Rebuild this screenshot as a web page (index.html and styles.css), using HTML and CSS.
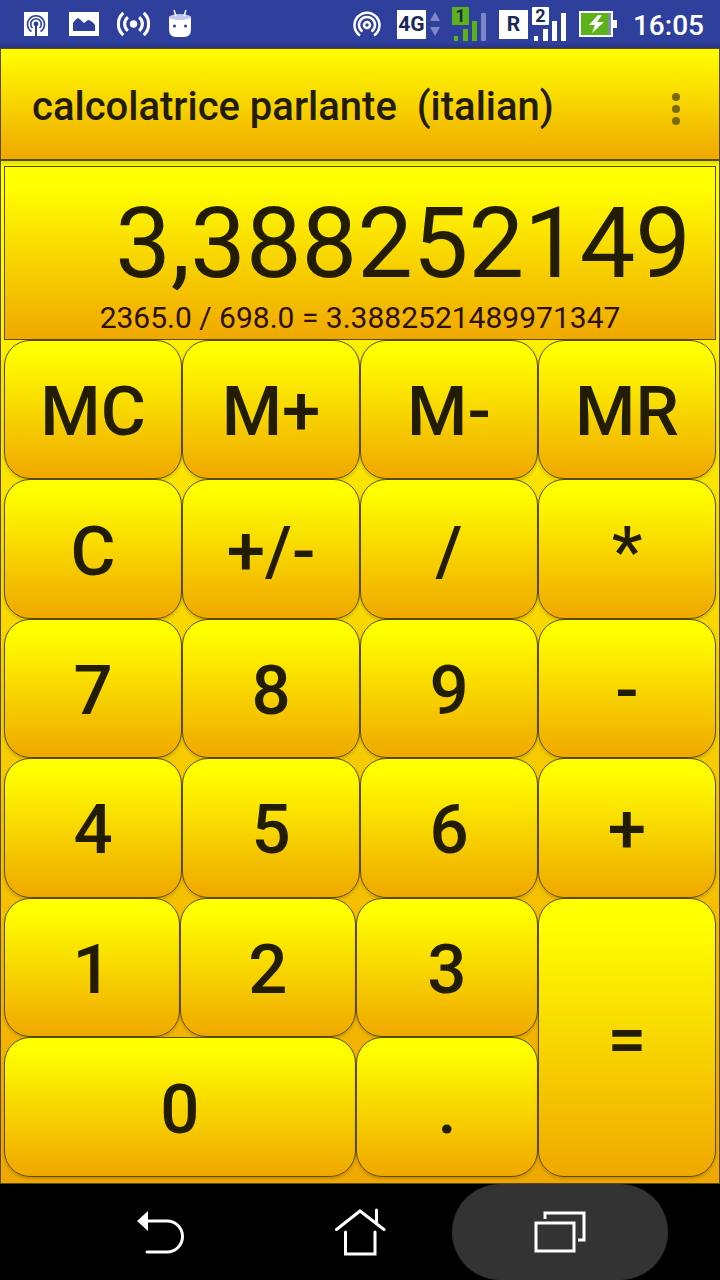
FILE: index.html
```
<!DOCTYPE html>
<html lang="it">
<head>
	<meta charset="utf-8">
	<meta name="viewport" content="width=device-width, initial-scale=1">
	<title>calcolatrice parlante</title>
	<link rel="stylesheet" href="styles.css">
</head>
<body>
	<!--status bar-->
	<div class="status">
		<div class="status-left">
			<svg width="27" height="24" viewBox="0 0 27 24">
				<rect width="24" height="24" fill="#fff"/>
				<g fill="none" stroke="#2f3f9c" stroke-width="1.6">
					<path d="M7.5 19.5A8.5 8.5 0 1 1 16.5 19.5"/>
					<path d="M8.5 16A5.3 5.3 0 1 1 15.5 16"/>
					<path d="M12 12V24" stroke-width="2"/>
				</g>
				<circle cx="12" cy="12" r="2.4" fill="#2f3f9c"/>
			</svg>
			<svg width="30" height="24" viewBox="0 0 30 24">
				<rect width="30" height="24" fill="#fff"/>
				<path d="M4 19V11Q8 5 10 6.500L15 11L19 8Q22 8 26 13V19Z" fill="#2f3f9c"/>
			</svg>
			<svg width="33" height="26" viewBox="1 0 34 26">
				<circle cx="18" cy="13" r="3.8" fill="#fff"/>
				<g fill="none" stroke="#fff" stroke-width="3.2">
					<path d="M12.200 6A9 9 0 0 0 12.200 20M23.800 6A9 9 0 0 1 23.800 20"/>
					<path d="M7.500 1.500A15.500 15.500 0 0 0 7.500 24.500M28.500 1.500A15.500 15.500 0 0 1 28.500 24.500"/>
				</g>
			</svg>
			<svg width="24" height="30" viewBox="0 0 24 30">
				<path d="M1 8H23V20Q23 28 16 28H8Q1 28 1 20Z" fill="#fff"/>
				<ellipse cx="12" cy="8" rx="11" ry="3" fill="#c3c9ea"/>
				<path d="M8 7L6 1M16 7L18 1" stroke="#fff" stroke-width="1.500"/>
				<circle cx="6.500" cy="17" r="1.500" fill="#2f3f9c"/>
				<circle cx="17.500" cy="17" r="1.500" fill="#2f3f9c"/>
			</svg>
		</div>
		<div class="status-right">
			<svg width="28" height="28" viewBox="0 0 28 28">
				<circle cx="14" cy="15" r="3" fill="none" stroke="#fff" stroke-width="2.500"/>
				<g fill="none" stroke="#fff" stroke-width="2.500">
					<path d="M7 25.500A12.500 12.500 0 1 1 21 25.500"/>
					<path d="M9.500 21.500A8 8 0 1 1 18.500 21.500"/>
				</g>
			</svg>
			<div class="network">
				<span class="tag">4G</span>
				<svg width="10" height="26" viewBox="0 0 10 26">
					<path d="M5 1L10 10H0ZM5 25L10 16H0Z" fill="#8188c8"/>
				</svg>
			</div>
			<svg class="signal" width="35" height="40" viewBox="0 -3 35 40">
				<rect width="17" height="18" rx="1" fill="#5bb319"/>
				<text x="8.500" y="15" fill="#1b2a55">1</text>
				<path d="M2 34V29H6V34ZM11 34V22H16V34ZM20 34V14H25V34Z" fill="#5bb319"/>
				<rect x="29" y="6" width="5" height="28" rx="1" fill="#7d85c9"/>
			</svg>
			<div class="sim">
				<span class="tag">R</span>
				<svg class="signal" width="35" height="40" viewBox="0 -3 35 40">
					<rect width="17" height="18" rx="1" fill="#fff"/>
					<text x="8.500" y="15" fill="#1b2a55">2</text>
					<path d="M2 34V29H6V34ZM11 34V22H16V34ZM20 34V14H25V34ZM29 34V6H34V34Z" fill="#fff"/>
				</svg>
			</div>
			<svg width="38" height="26" viewBox="0 0 38 26">
				<rect x="1" y="1" width="32" height="24" fill="#5bb319" stroke="#fff" stroke-width="2"/>
				<rect x="29" y="2" width="3" height="22" fill="#7d92a0"/>
				<rect x="34" y="9" width="4" height="8" fill="#fff"/>
				<path d="M19 4L10 14H16L13 22L25 11H18L23 4Z" fill="#fff"/>
			</svg>
			<span class="clock">16:05</span>
		</div>
	</div>

	<!--title bar-->
	<header class="bar">
		<h1>calcolatrice parlante &nbsp;(italian)</h1>
		<button class="more" aria-label="Menu">
			<svg width="8" height="32" viewBox="0 0 8 32">
				<circle cx="4" cy="4" r="4"/>
				<circle cx="4" cy="16" r="4"/>
				<circle cx="4" cy="28" r="4"/>
			</svg>
		</button>
	</header>

	<main class="calc">
		<div class="display">
			<output class="result">3,388252149</output>
			<p class="formula">2365.0 / 698.0 = 3.3882521489971347</p>
		</div>
		<!--memory, operators, 4-9-->
		<div class="keys">
			<button>MC</button>
			<button>M+</button>
			<button>M-</button>
			<button>MR</button>
			<button>C</button>
			<button>+/-</button>
			<button>/</button>
			<button>*</button>
			<button>7</button>
			<button>8</button>
			<button>9</button>
			<button>-</button>
			<button>4</button>
			<button>5</button>
			<button>6</button>
			<button>+</button>
		</div>
		<!--last two rows-->
		<div class="bottom">
			<div class="digits">
				<button>1</button>
				<button>2</button>
				<button>3</button>
				<button class="zero">0</button>
				<button>.</button>
			</div>
			<button>=</button>
		</div>
	</main>

	<nav class="nav">
		<button aria-label="Indietro">
			<svg width="48" height="46" viewBox="0 0 48 46">
				<path d="M12 12H31A15 15 0 0 1 31 43H11" fill="none" stroke="#fff" stroke-width="3" stroke-linecap="round"/>
				<path d="M1 12L12 2V22Z" fill="#fff"/>
			</svg>
		</button>
		<button aria-label="Home">
			<svg width="52" height="48" viewBox="0 0 52 48">
				<g fill="none" stroke="#fff" stroke-width="3" stroke-linecap="round">
					<path d="M2.500 21.500L26 3L50 21.500M42.500 2V14"/>
					<path d="M11.500 24V46H41V24"/>
				</g>
			</svg>
		</button>
		<button class="pressed" aria-label="App recenti">
			<svg width="52" height="42" viewBox="0 0 52 42">
				<g fill="none" stroke="#fff" stroke-width="3">
					<rect x="2" y="12" width="38" height="28"/>
					<path d="M11 8V2H50V29H44"/>
				</g>
			</svg>
		</button>
	</nav>
</body>
</html>
```
FILE: styles.css
```
*{
    margin: 0;
    padding: 0;
    box-sizing: border-box;
}

body{
    display: flex;
    flex-direction: column;
    min-height: 100vh;
    font-family: Roboto, "Noto Sans", sans-serif;
    color: #221c00;
    background: #000;
}

button{
    border: 0;
    background: none;
    font: inherit;
    color: inherit;
    cursor: pointer;
}

svg{
    display: block;
}

/*status bar*/
.status{
    display: flex;
    justify-content: space-between;
    height: 48px;
    padding: 0 16px 0 24px;
    background: linear-gradient(#2f3f9c 90%, #28347c);
    color: #fff;
}

.status-left, .status-right{
    display: flex;
    align-items: center;
}

.status-left{
    gap: 18px;
}

.status-right{
    gap: 12px;
}

.network, .sim{
    display: flex;
    align-items: center;
    gap: 4px;
}

.network{
    margin-left: 4px;
}

.tag{
    width: 29px;
    background: #fff;
    color: #1b2a55;
    font-size: 21px;
    font-weight: 700;
    line-height: 29px;
    text-align: center;
}

.signal text{
    font-size: 18px;
    font-weight: 700;
    text-anchor: middle;
}

.clock{
    margin-left: 4px;
    padding-top: 4px;
    font-size: 28px;
    font-weight: 500;
    line-height: 32px;
}

/*title bar*/
.bar{
    display: flex;
    align-items: center;
    justify-content: space-between;
    height: 113px;
    padding: 6px 31px 0;
    border: 1px solid #5a4a08;
    border-bottom-width: 2px;
    background: linear-gradient(#ff0, #f0a800);
}

.bar h1{
    font-size: 40px;
    font-weight: 500;
    line-height: 48px;
}

.more{
    padding: 12px 8px 8px;
    fill: #7a6a05;
}

/*calculator*/
.calc{
    flex: 1;
    display: flex;
    flex-direction: column;
    padding: 5px 3px 6px;
    border: 1px solid #5a4a08;
    border-top: 0;
    background: linear-gradient(#dcdc10, #ff0 6px, #f0a800);
}

.display{
    height: 174px;
    padding: 18px 24px 0;
    border: 1px solid #5a4a08;
    background: linear-gradient(#ff0 10%, #f0a800);
}

.result{
    display: block;
    font-size: 99px;
    line-height: 116px;
    text-align: right;
}

.formula{
    font-size: 30px;
    line-height: 34px;
    text-align: center;
    color: #2c1000;
}

.keys{
    flex: 139;
    display: grid;
    grid-template-columns: repeat(4, 1fr);
    grid-auto-rows: 1fr;
}

.bottom{
    flex: 70;
    display: grid;
    grid-template-columns: 3fr 1fr;
}

.digits{
    display: grid;
    grid-template-columns: 29fr 29fr 30fr;
    grid-auto-rows: 1fr;
}

.zero{
    grid-column: span 2;
}

.calc button{
    min-height: 80px;
    padding-top: 5px;
    border: 1px solid #5a4a08;
    border-radius: 26px;
    background: linear-gradient(#ff0 8%, #f0a800);
    box-shadow: 0 2px 3px rgba(90, 60, 0, .25);
    font-size: 69px;
    font-weight: 500;
    line-height: 80px;
}

/*navigation*/
.nav{
    display: grid;
    grid-template-columns: repeat(3, 1fr);
    height: 96px;
    padding: 0 60px;
}

.nav button{
    display: flex;
    align-items: center;
    justify-content: center;
    margin: 0 -8px;
    border-radius: 48px;
}

.nav .pressed{
    background: #333;
}
```
